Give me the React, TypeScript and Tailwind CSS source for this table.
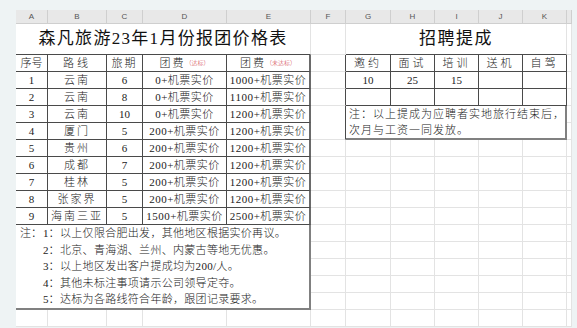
import React from 'react';

const FONT = { fontFamily: '"Liberation Serif", "Noto Sans CJK SC", serif' };

const letters = ['A', 'B', 'C', 'D', 'E', 'F', 'G', 'H', 'I', 'J', 'K', ''];

const routes = [
  ['1', '云南', '6', '0+机票实价', '1000+机票实价'],
  ['2', '云南', '8', '0+机票实价', '1100+机票实价'],
  ['3', '云南', '10', '0+机票实价', '1200+机票实价'],
  ['4', '厦门', '5', '200+机票实价', '1200+机票实价'],
  ['5', '贵州', '6', '200+机票实价', '1200+机票实价'],
  ['6', '成都', '7', '200+机票实价', '1200+机票实价'],
  ['7', '桂林', '5', '200+机票实价', '1200+机票实价'],
  ['8', '张家界', '5', '200+机票实价', '1200+机票实价'],
  ['9', '海南三亚', '5', '1500+机票实价', '2500+机票实价'],
];

const notes = [
  ['注：', '1：', '以上仅限合肥出发，其他地区根据实价再议。'],
  ['', '2：', '北京、青海湖、兰州、内蒙古等地无优惠。'],
  ['', '3：', '以上地区发出客户提成均为200/人。'],
  ['', '4：', '其他未标注事项请示公司领导定夺。'],
  ['', '5：', '达标为各路线符合年龄，跟团记录要求。'],
];

// plain sheet cell, light gridlines only
const grid = 'border-r border-b border-[#e3e3e3] bg-white';
// cell inside a bordered table
const cell = 'border-r border-b border-[#4a4a4a] bg-white flex items-center justify-center text-[11px] font-light text-[#222] whitespace-nowrap';

function App() {
  return (
    <div className="w-[577px] h-[328px] bg-[#eef3f4] pt-[10px] pl-[16px] overflow-hidden" style={FONT}>
      <div className="grid grid-cols-[32px_59px_36px_84px_84px_35px_45px_44px_44px_44px_44px_5px] grid-rows-[14px_31px_repeat(16,17px)] w-[556px]">

        {/* COLUMN LETTERS */}
        {letters.map((l, i) => (
          <div
            key={l + i}
            className="bg-[#e8e8e8] border-r border-b border-[#cfcfcf] flex items-center justify-center text-[8px] text-[#555]"
            style={{ fontFamily: '"Liberation Sans", sans-serif' }}
          >
            {l}
          </div>
        ))}

        {/* TITLES */}
        <div className="col-span-5 border-r border-[#e3e3e3] border-b border-b-[#4a4a4a] bg-white flex items-center justify-center text-[17px] font-normal tracking-[1.3px] text-[#111]">
          森凡旅游23年1月份报团价格表
        </div>
        <div className={grid} />
        <div className="col-span-5 border-r border-[#e3e3e3] border-b border-b-[#4a4a4a] bg-white flex items-center justify-center text-[17px] font-normal tracking-[1.5px] text-[#111]">
          招聘提成
        </div>
        <div className={grid} />

        {/* HEADER ROW */}
        <div className={cell}>序号</div>
        <div className={cell + ' tracking-[3px]'}>路线</div>
        <div className={cell + ' tracking-[2px]'}>旅期</div>
        <div className={cell}>
          <span className="tracking-[2px]">团费</span>
          <span className="text-[6px] text-[#d0303a]">（达标）</span>
        </div>
        <div className="border-r-2 border-r-[#6a6a6a] border-b border-[#4a4a4a] bg-white flex items-center justify-center text-[11px] font-light text-[#222] whitespace-nowrap">
          <span className="tracking-[2px]">团费</span>
          <span className="text-[6px] text-[#d0303a]">（未达标）</span>
        </div>
        <div className="border-r border-r-[#4a4a4a] border-b border-[#e3e3e3] bg-white" />
        {['邀约', '面试', '培训', '送机', '自驾'].map((h) => (
          <div key={h} className={cell + ' tracking-[3px]'}>{h}</div>
        ))}
        <div className={grid} />

        {/* DATA ROWS */}
        {routes.map((r, ri) => (
          <React.Fragment key={ri}>
            <div className={cell}>{r[0]}</div>
            <div className={cell + ' tracking-[2px]'}>{r[1]}</div>
            <div className={cell}>{r[2]}</div>
            <div className={cell + ' tracking-[0.5px]'}>{r[3]}</div>
            <div className="border-r-2 border-r-[#6a6a6a] border-b border-[#4a4a4a] bg-white flex items-center justify-center text-[11px] font-light text-[#222] whitespace-nowrap tracking-[0.5px]">
              {r[4]}
            </div>

            {ri === 0 && (
              <>
                <div className="border-r border-r-[#4a4a4a] border-b border-[#e3e3e3] bg-white" />
                <div className={cell}>10</div>
                <div className={cell}>25</div>
                <div className={cell}>15</div>
                <div className={cell} />
                <div className={cell} />
                <div className={grid} />
              </>
            )}

            {ri === 1 && (
              <>
                <div className="border-r border-r-[#4a4a4a] border-b border-[#e3e3e3] bg-white" />
                <div className={cell} />
                <div className={cell} />
                <div className={cell} />
                <div className={cell} />
                <div className={cell} />
                <div className={grid} />
              </>
            )}

            {ri === 2 && (
              <>
                <div className="row-span-2 border-r border-r-[#4a4a4a] border-b border-[#e3e3e3] bg-white" />
                <div className="col-span-5 row-span-2 border-r-2 border-b-2 border-[#808080] bg-white flex flex-col justify-center pl-[3px] text-[11px] font-light leading-[16px] tracking-[1px] text-[#222] whitespace-nowrap">
                  <span>注：以上提成为应聘者实地旅行结束后，</span>
                  <span>次月与工资一同发放。</span>
                </div>
                <div className={grid} />
              </>
            )}

            {ri === 3 && <div className={grid} />}

            {ri > 3 && (
              <>
                <div className={grid} />
                <div className={grid} />
                <div className={grid} />
                <div className={grid} />
                <div className={grid} />
                <div className={grid} />
                <div className={grid} />
              </>
            )}
          </React.Fragment>
        ))}

        {/* NOTES */}
        <div className="col-span-5 row-span-5 border-r-2 border-b-2 border-[#808080] bg-white flex flex-col text-[11px] font-light text-[#222] whitespace-nowrap">
          {notes.map((n, i) => (
            <div key={i} className="h-[17px] flex items-center">
              <span className="w-[27px] pl-[4px]">{n[0]}</span>
              <span className="w-[17px]">{n[1]}</span>
              <span className="tracking-[0.3px]">{n[2]}</span>
            </div>
          ))}
        </div>
        {Array.from({ length: 5 }).map((_, i) => (
          <React.Fragment key={'nr' + i}>
            {Array.from({ length: 7 }).map((_, j) => (
              <div key={j} className={grid} />
            ))}
          </React.Fragment>
        ))}

        {/* LAST ROW */}
        {letters.map((_, i) => (
          <div key={'last' + i} className={grid} />
        ))}

      </div>
    </div>
  );
}

export default App;
